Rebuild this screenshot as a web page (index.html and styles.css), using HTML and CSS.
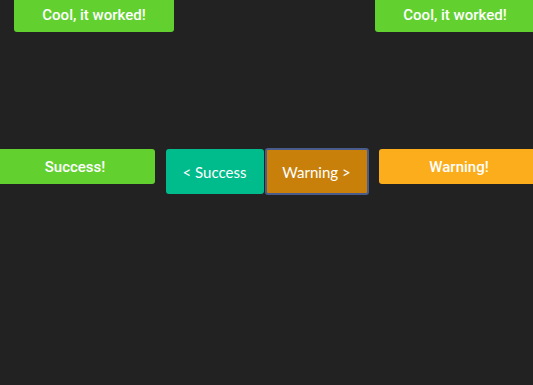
FILE: index.html
```html
<!DOCTYPE html>
<html>
<head>
<meta charset="utf-8">
<link rel="stylesheet" href="styles.css">
</head>
<body>
<div class="stage">
  <div class="toast toast-green toast-top-left">Cool, it worked!</div>
  <div class="toast toast-green toast-top-right">Cool, it worked!</div>
  <div class="toast toast-green toast-mid-left">Success!</div>
  <div class="toast toast-orange toast-mid-right">Warning!</div>
  <div class="buttons">
    <button class="btn btn-success">&lt; Success</button>
    <button class="btn btn-warning">Warning &gt;</button>
  </div>
</div>
</body>
</html>
```
FILE: styles.css
```css
html, body {
  margin: 0;
  padding: 0;
  background: #222222;
  width: 533px;
  height: 385px;
  overflow: hidden;
}
.stage {
  position: relative;
  width: 533px;
  height: 385px;
}
.toast {
  position: absolute;
  width: 160px;
  height: 35px;
  display: flex;
  align-items: center;
  justify-content: center;
  color: #ffffff;
  font-family: Roboto, "Liberation Sans", sans-serif;
  font-weight: 500;
  font-size: 15px;
  border-radius: 3px;
  box-sizing: border-box;
}
.toast-green { background: #62d130; }
.toast-orange { background: #fbad1b; }
.toast-top-left { left: 14px; top: -3px; }
.toast-top-right { left: 375px; top: -3px; }
.toast-mid-left { left: -5px; top: 149px; }
.toast-mid-right { left: 379px; top: 149px; }
.buttons {
  display: flex;
  justify-content: center;
  gap: 1px;
  padding-top: 148px;
  padding-left: 1px;
}
.btn {
  font-family: Lato, "Open Sans", sans-serif;
  font-size: 15px;
  color: #ffffff;
  border-radius: 3px;
  cursor: pointer;
  margin: 0;
}
.btn-success {
  background: #00bb8b;
  border: 0;
  width: 98px;
  height: 45px;
  margin-top: 1px;
}
.btn-warning {
  background: #c8800a;
  border: 2px solid #4a5c8c;
  width: 104px;
  height: 47px;
}
```
